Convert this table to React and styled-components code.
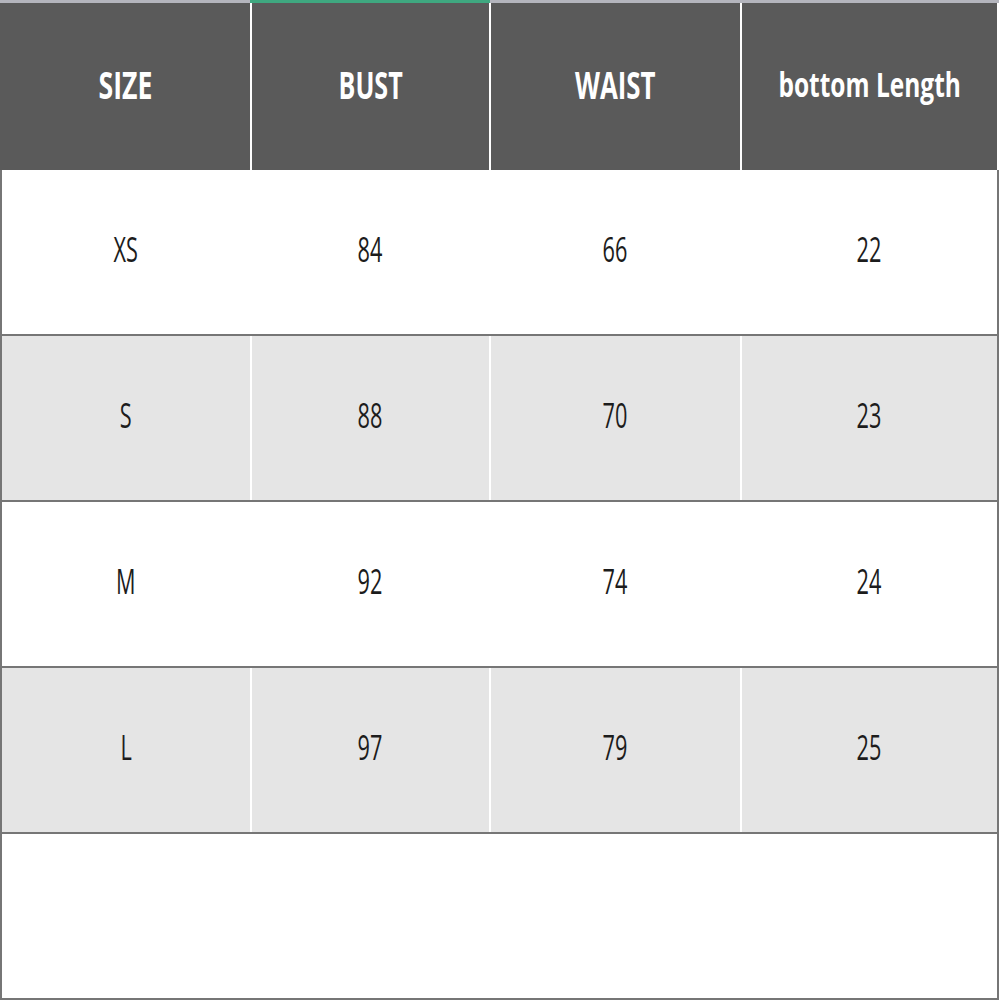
import React from 'react';
import styled, { createGlobalStyle } from 'styled-components';

const GlobalStyle = createGlobalStyle`
  html, body {
    margin: 0;
    padding: 0;
    background: #fff;
  }
  body {
    font-family: "Open Sans", "Liberation Sans", sans-serif;
  }
`;

const Table = styled.div`
  width: 999px;
  height: 1000px;
  display: flex;
  flex-direction: column;
  box-sizing: border-box;
`;

const TopStrip = styled.div`
  display: grid;
  grid-template-columns: 250px 240px 251px 258px;
  height: 3px;
`;

const StripPart = styled.div`
  background: ${(p) => (p.$active ? '#3fa880' : '#b4b5bd')};
`;

const Row = styled.div`
  display: grid;
  grid-template-columns: 252px 239px 251px 257px;
  height: ${(p) => (p.$header ? '167px' : '166px')};
  background: ${(p) => (p.$header ? '#5a5a5a' : p.$shade ? '#e5e5e5' : '#fff')};
  border-bottom: ${(p) => (p.$header ? 'none' : '2px solid #767676')};
  box-sizing: border-box;
`;

const Cell = styled.div`
  display: flex;
  align-items: center;
  justify-content: center;
  box-sizing: border-box;
  padding-bottom: ${(p) => (p.$header ? '6px' : '8px')};
  border-right: 2px solid #fff;
  ${(p) => p.$first && !p.$header && 'border-left: 2px solid #767676;'}
  &:last-child {
    border-right: 2px solid ${(p) => (p.$header ? '#fff' : '#767676')};
  }
`;

const Label = styled.span`
  display: inline-block;
  white-space: nowrap;
  transform: scaleX(${(p) => p.$squeeze || 0.66});
  color: ${(p) => (p.$header ? '#fff' : '#1c1c1c')};
  font-weight: ${(p) => (p.$header ? 700 : 400)};
  font-size: ${(p) => p.$size}px;
  line-height: 1;
`;

const headers = [
  { text: 'SIZE', size: 38, squeeze: 0.7 },
  { text: 'BUST', size: 38, squeeze: 0.66 },
  { text: 'WAIST', size: 38, squeeze: 0.68 },
  { text: 'bottom Length', size: 34, squeeze: 0.72 },
];

const rows = [
  ['XS', '84', '66', '22'],
  ['S', '88', '70', '23'],
  ['M', '92', '74', '24'],
  ['L', '97', '79', '25'],
  ['', '', '', ''],
];

export default function App() {
  return (
    <>
      <GlobalStyle />
      <Table>
        <TopStrip>
          <StripPart />
          <StripPart $active />
          <StripPart />
          <StripPart />
        </TopStrip>
        <Row $header>
          {headers.map((h, i) => (
            <Cell key={i} $header $first={i === 0}>
              <Label $header $size={h.size} $squeeze={h.squeeze}>
                {h.text}
              </Label>
            </Cell>
          ))}
        </Row>
        {rows.map((r, i) => (
          <Row key={i} $shade={i % 2 === 1}>
            {r.map((v, j) => (
              <Cell key={j} $first={j === 0}>
                <Label $size={35} $squeeze={0.62}>
                  {v}
                </Label>
              </Cell>
            ))}
          </Row>
        ))}
      </Table>
    </>
  );
}
